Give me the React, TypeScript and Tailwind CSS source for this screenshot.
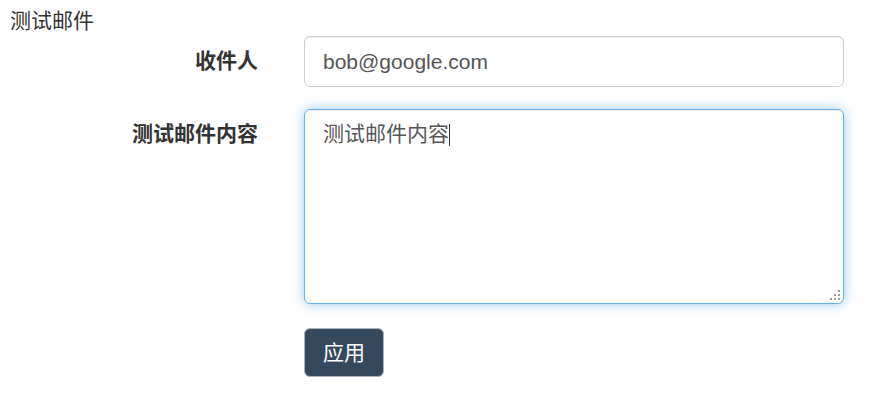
const font = "font-['Liberation_Sans','Noto_Sans_CJK_SC',sans-serif]";

// 右下角的拖拽点
function ResizeGrip() {
  const dots = [
    [8, 0],
    [4, 4],
    [8, 4],
    [0, 8],
    [4, 8],
    [8, 8],
  ];
  return (
    <svg className="absolute right-[4px] bottom-[4px]" width="10" height="10" viewBox="0 0 10 10">
      {dots.map(([x, y]) => (
        <rect key={`${x}-${y}`} x={x} y={y} width="2" height="2" fill="#999" />
      ))}
    </svg>
  );
}

export default function App() {
  return (
    <div className={`${font} bg-white w-[880px] h-[400px] text-[21px] leading-[30px] text-[#333]`}>
      {/* 标题 */}
      <div className="pt-[6px] pl-[10px]">测试邮件</div>

      <form className="flex flex-col" onSubmit={(e) => e.preventDefault()}>
        {/* 收件人 */}
        <div className="flex gap-[46px]">
          <label className="w-[258px] shrink-0 text-right font-bold pt-[10px]">收件人</label>
          <input
            type="text"
            defaultValue="bob@google.com"
            className="w-[540px] h-[51px] px-[18px] border border-[#ccc] rounded-[6px] text-[#555] text-[21px] outline-none shadow-[inset_0_1px_1px_rgba(0,0,0,0.075)]"
          />
        </div>

        {/* 内容 */}
        <div className="flex gap-[46px] mt-[22px]">
          <label className="w-[258px] shrink-0 text-right font-bold pt-[10px]">测试邮件内容</label>
          <div className="relative">
            <textarea
              defaultValue="测试邮件内容"
              className="block w-[540px] h-[195px] px-[18px] py-[9px] resize-none border border-[#66afe9] rounded-[6px] text-[#555] text-[21px] leading-[30px] outline-none shadow-[inset_0_1px_1px_rgba(0,0,0,0.075),0_0_12px_rgba(102,175,233,0.7)]"
            />
            <span className="absolute left-[145px] top-[15px] w-px h-[22px] bg-[#333]" />
            <ResizeGrip />
          </div>
        </div>

        {/* 按钮 */}
        <div className="flex mt-[24px] pl-[304px]">
          <button
            type="submit"
            className="h-[49px] px-[18px] bg-[#34495e] border border-[#aab2bd] rounded-[6px] text-white text-[21px] leading-[30px]"
          >
            应用
          </button>
        </div>
      </form>
    </div>
  );
}
